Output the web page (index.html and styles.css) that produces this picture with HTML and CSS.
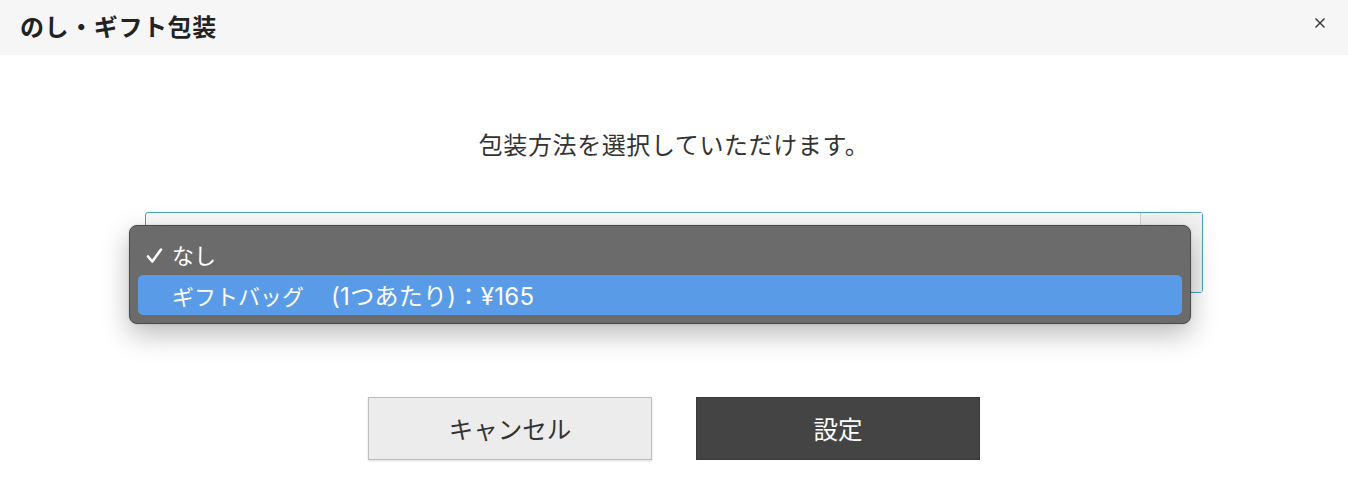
FILE: index.html
```html
<!DOCTYPE html>
<html lang="ja">
<head>
<meta charset="utf-8">
<link rel="stylesheet" href="styles.css">
</head>
<body>
<div class="modal">
  <header class="modal-header">
    <h1 class="modal-title">のし・ギフト包装</h1>
    <button class="close-btn" aria-label="閉じる">
      <svg width="12" height="12" viewBox="0 0 12 12"><path d="M1.5 1.5 L10.5 10.5 M10.5 1.5 L1.5 10.5" stroke="#333" stroke-width="1.4" fill="none"/></svg>
    </button>
  </header>
  <main class="modal-body">
    <p class="message">包装方法を選択していただけます。</p>
    <div class="select-wrap">
      <div class="select-box">
        <div class="select-value"></div>
        <div class="select-arrow"></div>
      </div>
      <ul class="dropdown">
        <li class="option selected"><svg class="check" width="17" height="17" viewBox="0 0 17 17"><path d="M2 9.5 L6.3 14.5 L15 2.5" stroke="#fff" stroke-width="2.6" fill="none" stroke-linecap="round" stroke-linejoin="round"/></svg>なし</li>
        <li class="option active">ギフトバッグ　<span class="price">(1つあたり)：¥165</span></li>
      </ul>
    </div>
    <div class="actions">
      <button class="btn btn-cancel">キャンセル</button>
      <button class="btn btn-ok">設定</button>
    </div>
  </main>
</div>
</body>
</html>
```
FILE: styles.css
```css
* { box-sizing: border-box; }
html, body { margin: 0; padding: 0; background: #fff; }
body {
  font-family: "Noto Sans CJK JP", "Noto Sans", sans-serif;
  color: #333;
  width: 1348px;
  height: 496px;
  overflow: hidden;
}
.modal-header {
  height: 55px;
  background: #f6f6f6;
  display: flex;
  align-items: center;
  justify-content: space-between;
  padding: 0 22px 0 20px;
}
.modal-title {
  margin: 0;
  font-size: 24px;
  font-weight: 700;
  color: #222;
  letter-spacing: 0.6px;
  line-height: 1;
  position: relative;
  top: -2px;
}
.close-btn {
  border: 0;
  background: none;
  padding: 0;
  width: 12px;
  height: 12px;
  display: flex;
  position: relative;
  top: -5px;
}
.modal-body {
  display: flex;
  flex-direction: column;
  align-items: center;
}
.message {
  margin: 71px 0 0;
  font-size: 24px;
  line-height: 36px;
  color: #333;
  letter-spacing: 0.6px;
}
.select-wrap {
  position: relative;
  margin-top: 50px;
  width: 1058px;
}
.select-box {
  height: 81px;
  border: 1.5px solid #45a4ba;
  border-radius: 3px;
  display: flex;
  background: #fbfbfb;
}
.select-value { flex: 1; border-right: 1px solid #d4d4d4; }
.select-arrow { width: 61px; background: #f2f2f2; }
.dropdown {
  position: absolute;
  left: -16px;
  top: 13px;
  width: 1062px;
  height: 99px;
  margin: 0;
  padding: 8px;
  list-style: none;
  background: #6b6b6b;
  border: 1px solid #4a4a4a;
  border-radius: 8px;
  box-shadow: 0 10px 28px rgba(0,0,0,0.28), 0 0 2px rgba(0,0,0,0.2);
  display: flex;
  flex-direction: column;
  justify-content: flex-end;
}
.option {
  height: 41px;
  display: flex;
  align-items: center;
  padding-left: 34px;
  font-size: 22px;
  color: #fff;
  font-family: "Inter", "Noto Sans CJK JP", sans-serif;
  position: relative;
  white-space: pre;
}
.price {
  margin-left: 5px;
  font-size: 24px;
  letter-spacing: 0.3px;
}
.option.active {
  background: #5a9be8;
  border-radius: 5px;
}
.check {
  position: absolute;
  left: 8px;
  top: 13px;
}
.actions {
  display: flex;
  gap: 44px;
  margin-top: 104px;
}
.btn {
  width: 284px;
  height: 63px;
  font-family: "Noto Sans CJK JP", "Noto Sans", sans-serif;
  font-size: 24.5px;
  cursor: pointer;
  padding: 0;
}
.btn-cancel {
  background: #ececec;
  border: 1.5px solid #bdbdbd;
  box-shadow: 0 1px 2px rgba(0,0,0,0.15);
  color: #333;
}
.btn-ok {
  background: #444;
  border: 1px solid #3a3a3a;
  color: #fff;
}
```
